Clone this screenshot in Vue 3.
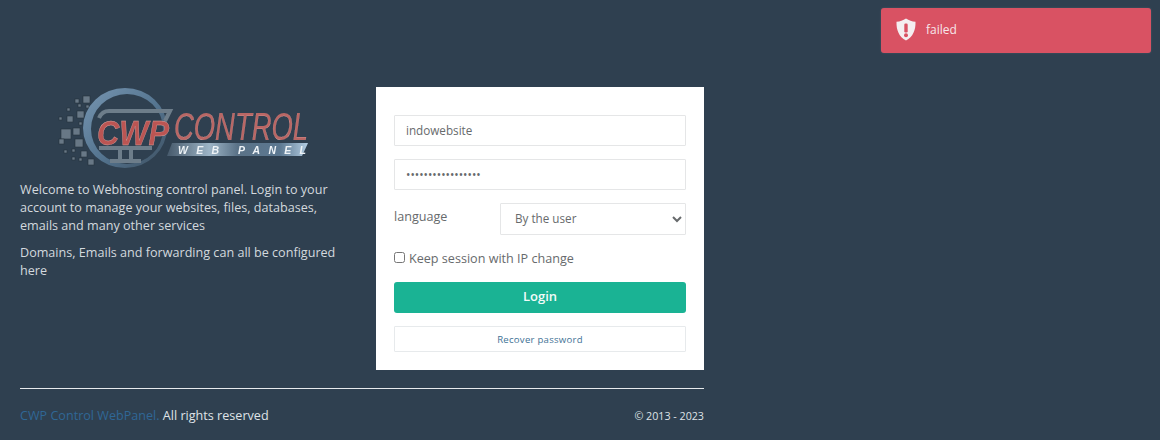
<script setup>
const squares = [
  [83,96,7],[75,99,4],[67,108,3],[78,104,3],[86,105,3],[77,111,7],[67,116,6],[59,117,3],
  [61,129,10],[73,128,7],[79,122,3],[59,139,5],[75,139,8],[64,150,3],[72,149,3],[81,151,6],
  [72,157,3],[79,158,3],[88,159,6]
]
</script>

<template>
  <div class="page">
    <div class="toast">
      <svg class="toast-icon" width="20" height="23" viewBox="0 0 20 23">
        <path d="M10 0.5 C13 2.5 16 3.5 19.5 3.8 C19.8 12 17 19 10 22.5 C3 19 0.2 12 0.5 3.8 C4 3.5 7 2.5 10 0.5 Z" fill="#f4eef0" />
        <rect x="8.3" y="5.5" width="3.4" height="9" rx="1.3" fill="#d95263" />
        <circle cx="10" cy="17.2" r="2" fill="#d95263" />
      </svg>
      <span>failed</span>
    </div>

    <div class="main">
      <div class="intro">
        <svg class="logo" width="270" height="92" viewBox="45 80 270 92">
          <defs>
            <linearGradient id="ring" x1="0" y1="0" x2="1" y2="1">
              <stop offset="0" stop-color="#7796b2" />
              <stop offset="0.55" stop-color="#54748f" />
              <stop offset="1" stop-color="#3d4f60" />
            </linearGradient>
            <linearGradient id="banner" x1="0" y1="0" x2="1" y2="0">
              <stop offset="0" stop-color="#46596b" />
              <stop offset="0.3" stop-color="#9db4c6" />
              <stop offset="0.5" stop-color="#5a7287" />
              <stop offset="0.8" stop-color="#5c7891" />
              <stop offset="1" stop-color="#b3cde2" />
            </linearGradient>
          </defs>
          <rect v-for="(s, i) in squares" :key="i" :x="s[0]" :y="s[1]" :width="s[2]" :height="s[2]" fill="#687886" stroke="#26323d" stroke-width="0.6" />
          <path fill-rule="evenodd" fill="url(#ring)" d="M83 128 A42 40 0 1 1 167 128 A42 40 0 1 1 83 128 Z M91 129 A36 35 0 1 0 163 129 A36 35 0 1 0 91 129 Z" />
          <path d="M99 118 Q102 111 109 111 L170 111 L165 121 M99 148 L152 148 M120 150 L120 160 M131 150 L131 160 M110 161 L141 161" fill="none" stroke="#6d7d8a" stroke-width="4" />
          <text x="97" y="145" class="cwp" textLength="72" lengthAdjust="spacingAndGlyphs">CWP</text>
          <text x="174" y="140" class="control" textLength="134" lengthAdjust="spacingAndGlyphs">CONTROL</text>
          <polygon points="172,143 308,143 302,156 167,156" fill="url(#banner)" />
          <text x="178" y="153.5" class="web">WEB</text>
          <text x="238" y="153.5" class="web">PANEL</text>
        </svg>
        <p>Welcome to Webhosting control panel. Login to your account to manage your websites, files, databases, emails and many other services</p>
        <p>Domains, Emails and forwarding can all be configured here</p>
      </div>

      <form class="card" @submit.prevent>
        <input class="field" type="text" value="indowebsite" />
        <input class="field" type="password" value="indowebsite123456" />
        <div class="lang-row">
          <label class="lang-label">language</label>
          <select class="lang-select">
            <option>By the user</option>
          </select>
        </div>
        <label class="keep">
          <input type="checkbox" />
          <span>Keep session with IP change</span>
        </label>
        <button class="login" type="button">Login</button>
        <a class="recover">Recover password</a>
      </form>
    </div>

    <footer class="foot">
      <span><a class="brand">CWP Control WebPanel.</a> All rights reserved</span>
      <small>© 2013 - 2023</small>
    </footer>
  </div>
</template>

<style scoped>
.page {
  width: 684px;
  padding: 87px 0 0 20px;
  height: 353px;
  font-family: "Open Sans", sans-serif;
  font-size: 12.6px;
  color: #d3d9de;
}
.toast {
  position: absolute;
  left: 881px;
  top: 8px;
  width: 270px;
  height: 45px;
  box-sizing: border-box;
  display: flex;
  align-items: center;
  gap: 10px;
  padding: 0 0 2px 15px;
  background: #d95263;
  border-radius: 3px;
  color: #f6e6e9;
  font-size: 12px;
  box-shadow: 0 0 2px rgba(255, 255, 255, 0.15);
}
.main {
  display: flex;
  justify-content: space-between;
  height: 283px;
}
.intro {
  width: 324px;
  position: relative;
  padding-top: 94px;
  box-sizing: border-box;
}
.logo {
  position: absolute;
  left: 25px;
  top: -7px;
  filter: blur(0.35px);
}
.cwp {
  font: italic 700 35px "Liberation Sans", sans-serif;
  fill: #bb5553;
  stroke: #dfa09c;
  stroke-width: 0.4;
}
.control {
  font: italic 400 39px "Liberation Sans", sans-serif;
  fill: #b96765;
  stroke: #e6aaa7;
  stroke-width: 0.2;
}
.web {
  font: italic 700 10.5px "Liberation Sans", sans-serif;
  fill: #eef3f7;
  letter-spacing: 8.3px;
}
.intro p {
  margin: 0 0 9px;
  font-size: 12.6px;
  line-height: 18px;
}
.card {
  width: 328px;
  box-sizing: border-box;
  background: #fff;
  padding: 28px 18px 18px;
  display: flex;
  flex-direction: column;
}
.field {
  height: 31px;
  box-sizing: border-box;
  border: 1px solid #e5e6e7;
  padding: 0 11px 1px;
  margin-bottom: 13px;
  font: 11.7px "Open Sans", sans-serif;
  color: #676a6c;
  outline: none;
  border-radius: 1px;
  background: #fff;
}
.lang-row {
  display: flex;
  justify-content: space-between;
  height: 32px;
  margin-bottom: 12px;
}
.lang-label {
  color: #676a6c;
  font-size: 12.6px;
  line-height: 27px;
}
.lang-select {
  width: 186px;
  height: 32px;
  box-sizing: border-box;
  border: 1px solid #e5e6e7;
  background: #fff;
  padding: 0 10px 2px;
  font: 11.7px "Open Sans", sans-serif;
  color: #676a6c;
  outline: none;
  border-radius: 1px;
}
.keep {
  display: flex;
  align-items: center;
  gap: 4px;
  height: 20px;
  margin-top: 1px;
  color: #676a6c;
  font-size: 12.6px;
  margin-bottom: 14px;
}
.keep input {
  margin: -2px 0 0 0;
  width: 11px;
  height: 11px;
}
.login {
  height: 31px;
  border: 0;
  border-radius: 3px;
  background: #1ab394;
  color: #f2fbf9;
  font: 600 13px "Open Sans", sans-serif;
  margin-bottom: 13px;
  padding: 0 0 3px;
}
.recover {
  height: 26px;
  box-sizing: border-box;
  border: 1px solid #e7eaec;
  display: flex;
  align-items: center;
  justify-content: center;
  color: #3f7396;
  font-size: 9.6px;
  letter-spacing: 0.25px;
  border-radius: 1px;
}
.foot {
  margin-top: 18px;
  border-top: 1px solid #e7eaec;
  padding-top: 18px;
  display: flex;
  justify-content: space-between;
  align-items: center;
  font-size: 12.6px;
  color: #dfe3e7;
}
.brand {
  color: #2f6796;
}
.foot small {
  font-size: 10.7px;
}
</style>

<style>
body {
  background: #2f4050;
}
</style>
